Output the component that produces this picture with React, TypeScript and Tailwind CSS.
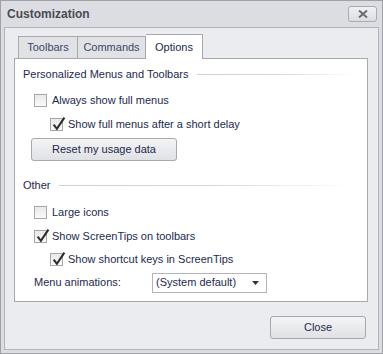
const font = { fontFamily: '"Liberation Sans", Arial, sans-serif' };

function Check({ checked }: { checked?: boolean }) {
  return (
    <span className="relative inline-block w-[13px] h-[13px] border border-[#a7a7a7] bg-gradient-to-b from-[#e9e9ec] to-[#fafafa] shrink-0">
      {checked && (
        <svg viewBox="0 0 14 14" className="absolute left-[0px] top-[-3px] w-[15px] h-[15px]">
          <path d="M2.5 8 L5.5 12 L12.5 1.5" fill="none" stroke="#2b2b2b" strokeWidth={1.9} strokeLinejoin="miter" />
        </svg>
      )}
    </span>
  );
}

function CheckRow({ label, checked, indent, h = 'h-[24px]' }: { label: string; checked?: boolean; indent?: boolean; h?: string }) {
  return (
    <div className={`flex items-center gap-[5px] ${h} ${indent ? 'pl-[35px]' : 'pl-[19px]'}`}>
      <Check checked={checked} />
      <span>{label}</span>
    </div>
  );
}

function GroupTitle({ text }: { text: string }) {
  return (
    <div className="flex items-center gap-[8px] h-[18px] pl-[8px] pr-[12px]">
      <span>{text}</span>
      <div className="flex-1 h-px bg-gradient-to-r from-[#d0d0d0] via-[#d6d6d6] to-[#ffffff]" />
    </div>
  );
}

export default function App() {
  return (
    <div
      className="w-[383px] h-[354px] border border-[#9fa0a8] bg-[#dcdde3] flex flex-col text-[11px] text-[#1b2a4e]"
      style={font}
    >
      <div className="h-[26px] flex items-center justify-between pl-[6px] pr-[5px]">
        <span className="font-bold text-[12px] text-[#4a4b52]">Customization</span>
        <div className="w-[29px] h-[16px] rounded-[3px] border border-[#a9abb2] bg-gradient-to-b from-[#f1f1f4] to-[#dcdde2] flex items-center justify-center">
          <svg viewBox="0 0 10 8" className="w-[10px] h-[8px]">
            <path d="M1 0.5 L9 7.5 M9 0.5 L1 7.5" stroke="#6b6b70" strokeWidth={2} />
          </svg>
        </div>
      </div>
      <div className="flex-1 mx-[3px] mb-[3px] border border-[#b3b4ba] bg-[#ebecf0] flex flex-col pt-[6px] pl-[9px] pr-[10px]">
        <div className="flex items-end h-[24px] pl-[4px] text-[#3a4869]">
          <div className="h-[22px] w-[60px] flex items-center justify-center border border-b-0 border-[#a9a9ad] bg-[#e1e2e6]">Toolbars</div>
          <div className="h-[22px] w-[68px] flex items-center justify-center border border-b-0 border-l-0 border-[#a9a9ad] bg-[#e1e2e6]">Commands</div>
          <div className="h-[25px] w-[57px] flex items-center justify-center border border-b-0 border-l-0 border-[#a9a9ad] bg-white text-[#1b2a4e] relative top-[1px] z-10">Options</div>
        </div>
        <div className="h-[244px] border border-[#a9a9ad] bg-white flex flex-col pt-[6px]">
          <GroupTitle text="Personalized Menus and Toolbars" />
          <div className="h-[5px]" />
          <CheckRow label="Always show full menus" />
          <CheckRow label="Show full menus after a short delay" checked indent />
          <div className="pl-[16px] pt-[2px]">
            <button className="w-[146px] h-[23px] rounded-[3px] border border-[#a8a8ad] bg-gradient-to-b from-[#f4f4f6] to-[#e0e1e5] text-[#1b2a4e]">
              Reset my usage data
            </button>
          </div>
          <div className="h-[15px]" />
          <GroupTitle text="Other" />
          <div className="h-[6px]" />
          <CheckRow label="Large icons" />
          <CheckRow label="Show ScreenTips on toolbars" checked />
          <CheckRow label="Show shortcut keys in ScreenTips" checked indent h="h-[23px]" />
          <div className="flex items-center h-[23px] pl-[19px]">
            <span className="w-[118px]">Menu animations:</span>
            <div className="w-[115px] h-[20px] border border-[#b4b4b8] bg-white flex items-center justify-between pl-[3px] pr-[7px]">
              <span>(System default)</span>
              <svg viewBox="0 0 7 4" className="w-[7px] h-[4px]">
                <path d="M0 0 H7 L3.5 4 Z" fill="#333" />
              </svg>
            </div>
          </div>
        </div>
        <div className="flex justify-end pt-[14px] pr-[2px]">
          <button className="w-[96px] h-[23px] rounded-[3px] border border-[#a8a8ad] bg-gradient-to-b from-[#f4f4f6] to-[#e0e1e5] text-[#1b2a4e]">
            Close
          </button>
        </div>
      </div>
    </div>
  );
}
